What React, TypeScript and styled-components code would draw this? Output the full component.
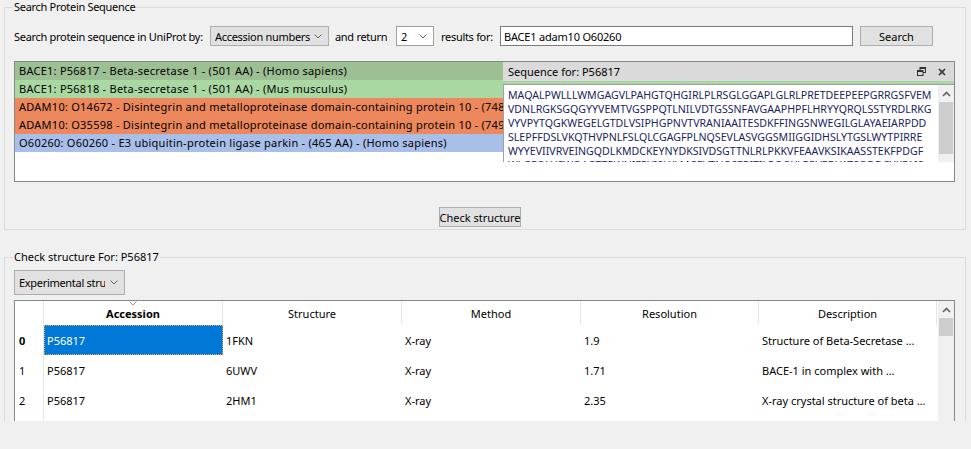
import React from 'react';
import styled, { createGlobalStyle } from 'styled-components';

const GlobalStyle = createGlobalStyle`
  html, body { margin: 0; padding: 0; background: #f0f0f0; }
  body {
    font-family: "Noto Sans", "Open Sans", sans-serif;
    font-size: 11px;
    color: #000;
  }
  #root { width: 971px; height: 449px; overflow: hidden; }
  * { box-sizing: border-box; }
`;

const Window = styled.div`
  width: 971px;
  height: 449px;
  display: flex;
  flex-direction: column;
  background: #f0f0f0;
  overflow: hidden;
`;

const Viewport = styled.div`
  height: 421px;
  flex: none;
  overflow: hidden;
  padding: 0 5px 0 4px;
  display: flex;
  flex-direction: column;
`;

const Group = styled.fieldset<{ $mt: number; $pad: string }>`
  margin: ${p => p.$mt}px 0 0 0;
  padding: ${p => p.$pad};
  border: 1px solid #dcdcdc;
  min-width: 0;
  flex: none;
  display: flex;
  flex-direction: column;
`;

const Legend = styled.legend<{ $ls?: number }>`
  margin-left: -1px;
  padding: 0 1px;
  line-height: 14px;
  font-size: 11px;
  letter-spacing: ${p => p.$ls ?? 0}px;
`;

const TopRow = styled.div`
  display: flex;
  align-items: center;
  height: 20px;
`;

const Label = styled.span<{ $w: number; $pl?: number }>`
  width: ${p => p.$w}px;
  padding-left: ${p => p.$pl ?? 0}px;
  flex: none;
  white-space: nowrap;
  letter-spacing: -0.3px;
`;

const Combo = styled.div<{ $w: number; $h?: number; $white?: boolean }>`
  width: ${p => p.$w}px;
  height: ${p => p.$h ?? 20}px;
  flex: none;
  display: flex;
  align-items: center;
  justify-content: space-between;
  padding: 0 6px 0 4px;
  background: ${p => (p.$white ? '#ffffff' : '#e1e1e1')};
  border: 1px solid ${p => (p.$white ? '#a0a0a0' : '#adadad')};
`;

const ComboText = styled.span<{ $clip?: number }>`
  white-space: nowrap;
  overflow: hidden;
  letter-spacing: -0.3px;
  ${p => (p.$clip ? `width: ${p.$clip}px;` : '')}
`;

const TextField = styled.div<{ $w: number }>`
  width: ${p => p.$w}px;
  height: 20px;
  flex: none;
  background: #fff;
  border: 1px solid #7a7a7a;
  padding: 0 3px;
  display: flex;
  align-items: center;
  white-space: nowrap;
  letter-spacing: -0.2px;
`;

const PushButton = styled.div<{ $w: number; $ml?: number }>`
  width: ${p => p.$w}px;
  height: 20px;
  margin-left: ${p => p.$ml ?? 0}px;
  flex: none;
  background: #e1e1e1;
  border: 1px solid #adadad;
  display: flex;
  align-items: center;
  justify-content: center;
  white-space: nowrap;
`;

const ResultList = styled.div`
  position: relative;
  margin-top: 15px;
  height: 121px;
  background: #fff;
  border: 1px solid #828790;
  overflow: hidden;
`;

const ResultRow = styled.div<{ $bg: string }>`
  height: 18px;
  line-height: 18px;
  padding-left: 4px;
  background: ${p => p.$bg};
  white-space: nowrap;
  overflow: hidden;
  letter-spacing: 0.25px;
`;

const Dock = styled.div`
  position: absolute;
  top: 0;
  left: 488px;
  right: 0;
  height: 100px;
  display: flex;
  flex-direction: column;
`;

const DockTitle = styled.div`
  height: 19px;
  flex: none;
  background: #dadada;
  display: flex;
  align-items: center;
  justify-content: space-between;
  padding: 0 8px 0 5px;
`;

const DockButtons = styled.div`
  display: flex;
  align-items: center;
  gap: 12px;
`;

const DockFrame = styled.div`
  margin-top: 3px;
  flex: 1;
  display: flex;
  background: #fff;
  border: 1px solid #a0a0a0;
  border-bottom: none;
  border-right: none;
  overflow: hidden;
`;

const SeqText = styled.div`
  flex: 1;
  padding: 3px 0 0 4px;
  color: #1a2560;
  font-size: 10.6px;
  line-height: 14px;
  overflow: hidden;
`;

const SeqLine = styled.div`
  height: 14px;
  white-space: nowrap;
`;

const ScrollBar = styled.div`
  width: 16px;
  flex: none;
  background: #f0f0f0;
  display: flex;
  flex-direction: column;
`;

const ScrollArrow = styled.div`
  height: 17px;
  flex: none;
  display: flex;
  align-items: center;
  justify-content: center;
`;

const ScrollThumb = styled.div<{ $h: number }>`
  height: ${p => p.$h}px;
  flex: none;
  margin: 0 1px;
  background: #cdcdcd;
`;

const ButtonRow = styled.div`
  display: flex;
  justify-content: center;
  padding-right: 9px;
  margin-top: 25px;
`;

const Table = styled.div`
  margin-top: 5px;
  width: 941px;
  height: 200px;
  flex: none;
  background: #fff;
  border: 1px solid #828790;
  display: flex;
`;

const TableMain = styled.div`
  flex: 1;
  display: flex;
  flex-direction: column;
`;

const HeaderRow = styled.div`
  display: flex;
  height: 24px;
`;

const HeaderCell = styled.div<{ $w: number; $bold?: boolean }>`
  position: relative;
  width: ${p => p.$w}px;
  flex: none;
  border-right: 1px solid #e5e5e5;
  display: flex;
  align-items: center;
  justify-content: center;
  font-weight: ${p => (p.$bold ? 700 : 400)};
`;

const SortMark = styled.span`
  position: absolute;
  top: 0;
  left: 50%;
  margin-left: -4px;
  line-height: 0;
`;

const BodyRow = styled.div`
  display: flex;
  height: 30px;
`;

const RowHeaderCell = styled.div<{ $bold?: boolean }>`
  width: 29px;
  flex: none;
  border-right: 1px solid #e5e5e5;
  padding-left: 4px;
  display: flex;
  align-items: center;
  font-weight: ${p => (p.$bold ? 700 : 400)};
`;

const Cell = styled.div<{ $w: number; $sel?: boolean }>`
  width: ${p => p.$w}px;
  flex: none;
  padding-left: 3px;
  display: flex;
  align-items: center;
  white-space: nowrap;
  overflow: hidden;
  background: ${p => (p.$sel ? '#0078d7' : 'transparent')};
  color: ${p => (p.$sel ? '#ffffff' : '#000000')};
  outline: ${p => (p.$sel ? '1px dotted #f0a040' : 'none')};
  outline-offset: -1px;
`;

const Footer = styled.div`
  flex: 1;
  background: #f0f0f0;
`;

const ComboChevron = () => (
  <svg width="8" height="5" viewBox="0 0 8 5">
    <path d="M0.5 0.5 L4 4 L7.5 0.5" fill="none" stroke="#606060" strokeWidth="1" />
  </svg>
);

const ScrollChevron = ({ down = false }: { down?: boolean }) => (
  <svg width="9" height="6" viewBox="0 0 9 6">
    <path
      d={down ? 'M1 1 L4.5 4.5 L8 1' : 'M1 5 L4.5 1.5 L8 5'}
      fill="none"
      stroke="#606060"
      strokeWidth="1.6"
    />
  </svg>
);

const FloatIcon = () => (
  <svg width="9" height="9" viewBox="0 0 9 9">
    <rect x="3" y="0.5" width="5.5" height="5" fill="#dadada" stroke="#333" strokeWidth="1" />
    <rect x="3" y="0.5" width="5.5" height="1.5" fill="#333" />
    <rect x="0.5" y="3.5" width="5.5" height="5" fill="#dadada" stroke="#333" strokeWidth="1" />
    <rect x="0.5" y="3.5" width="5.5" height="1.5" fill="#333" />
  </svg>
);

const CloseIcon = () => (
  <svg width="8" height="8" viewBox="0 0 8 8">
    <path d="M1 1 L7 7 M7 1 L1 7" stroke="#333" strokeWidth="1.7" />
  </svg>
);

const results = [
  { text: 'BACE1: P56817 - Beta-secretase 1 - (501 AA) - (Homo sapiens)', bg: '#9cbf93' },
  { text: 'BACE1: P56818 - Beta-secretase 1 - (501 AA) - (Mus musculus)', bg: '#a9d8a2' },
  { text: 'ADAM10: O14672 - Disintegrin and metalloproteinase domain-containing protein 10 - (748 AA) - (Homo sapiens)', bg: '#ec885b' },
  { text: 'ADAM10: O35598 - Disintegrin and metalloproteinase domain-containing protein 10 - (749 AA) - (Mus musculus)', bg: '#ec885b' },
  { text: 'O60260: O60260 - E3 ubiquitin-protein ligase parkin - (465 AA) - (Homo sapiens)', bg: '#a8bfea' },
];

const sequence = [
  'MAQALPWLLLWMGAGVLPAHGTQHGIRLPLRSGLGGAPLGLRLPRETDEEPEEPGRRGSFVEM',
  'VDNLRGKSGQGYYVEMTVGSPPQTLNILVDTGSSNFAVGAAPHPFLHRYYQRQLSSTYRDLRKG',
  'VYVPYTQGKWEGELGTDLVSIPHGPNVTVRANIAAITESDKFFINGSNWEGILGLAYAEIARPDD',
  'SLEPFFDSLVKQTHVPNLFSLQLCGAGFPLNQSEVLASVGGSMIIGGIDHSLYTGSLWYTPIRRE',
  'WYYEVIIVRVEINGQDLKMDCKEYNYDKSIVDSGTTNLRLPKKVFEAAVKSIKAASSTEKFPDGF',
  'WLGEQLVCWQAGTTPWNIFPVISLYLMGEVTNQSFRITILPQQYLRPVEDVATSQDDCYKFAIS',
];

const columns = [
  { title: 'Accession', w: 179, bold: true },
  { title: 'Structure', w: 179 },
  { title: 'Method', w: 179 },
  { title: 'Resolution', w: 178 },
  { title: 'Description', w: 178 },
];

const rows = [
  ['P56817', '1FKN', 'X-ray', '1.9', 'Structure of Beta-Secretase …'],
  ['P56817', '6UWV', 'X-ray', '1.71', 'BACE-1 in complex with …'],
  ['P56817', '2HM1', 'X-ray', '2.35', 'X-ray crystal structure of beta …'],
  ['P56817', '4DJU', 'X-ray', '1.8', 'Crystal structure of BACE …'],
];

export default function App() {
  return (
    <Window>
      <GlobalStyle />
      <Viewport>
        <Group $mt={0} $pad="12px 10px 2px 9px">
          <Legend $ls={-0.3}>Search Protein Sequence</Legend>
          <TopRow>
            <Label $w={196}>Search protein sequence in UniProt by:</Label>
            <Combo $w={119}>
              <ComboText>Accession numbers</ComboText>
              <ComboChevron />
            </Combo>
            <Label $w={67} $pl={6}>and return</Label>
            <Combo $w={38} $white>
              <ComboText>2</ComboText>
              <ComboChevron />
            </Combo>
            <Label $w={66} $pl={7}>results for:</Label>
            <TextField $w={353}>BACE1 adam10 O60260</TextField>
            <PushButton $w={73} $ml={7}>Search</PushButton>
          </TopRow>
          <ResultList>
            {results.map(r => (
              <ResultRow key={r.text} $bg={r.bg}>{r.text}</ResultRow>
            ))}
            <Dock>
              <DockTitle>
                <span>Sequence for: P56817</span>
                <DockButtons>
                  <FloatIcon />
                  <CloseIcon />
                </DockButtons>
              </DockTitle>
              <DockFrame>
                <SeqText>
                  {sequence.map(l => (
                    <SeqLine key={l}>{l}</SeqLine>
                  ))}
                </SeqText>
                <ScrollBar>
                  <ScrollArrow><ScrollChevron /></ScrollArrow>
                  <ScrollThumb $h={52} />
                </ScrollBar>
              </DockFrame>
            </Dock>
          </ResultList>
          <ButtonRow>
            <PushButton $w={82}>Check structure</PushButton>
          </ButtonRow>
        </Group>
        <Group $mt={20} $pad="6px 10px 0 9px">
          <Legend>Check structure For: P56817</Legend>
          <Combo $w={111} $h={25}>
            <ComboText $clip={86}>Experimental structures</ComboText>
            <ComboChevron />
          </Combo>
          <Table>
            <TableMain>
              <HeaderRow>
                <RowHeaderCell />
                {columns.map(c => (
                  <HeaderCell key={c.title} $w={c.w} $bold={c.bold}>
                    {c.bold && (
                      <SortMark>
                        <svg width="8" height="5" viewBox="0 0 8 5">
                          <path d="M0.5 0.5 L4 4 L7.5 0.5" fill="none" stroke="#9a9a9a" strokeWidth="1" />
                        </svg>
                      </SortMark>
                    )}
                    {c.title}
                  </HeaderCell>
                ))}
              </HeaderRow>
              {rows.map((r, i) => (
                <BodyRow key={i}>
                  <RowHeaderCell $bold={i === 0}>{i}</RowHeaderCell>
                  {r.map((v, j) => (
                    <Cell key={j} $w={columns[j].w} $sel={i === 0 && j === 0}>{v}</Cell>
                  ))}
                </BodyRow>
              ))}
            </TableMain>
            <ScrollBar>
              <ScrollArrow><ScrollChevron /></ScrollArrow>
              <ScrollThumb $h={18} />
            </ScrollBar>
          </Table>
        </Group>
      </Viewport>
      <Footer />
    </Window>
  );
}
